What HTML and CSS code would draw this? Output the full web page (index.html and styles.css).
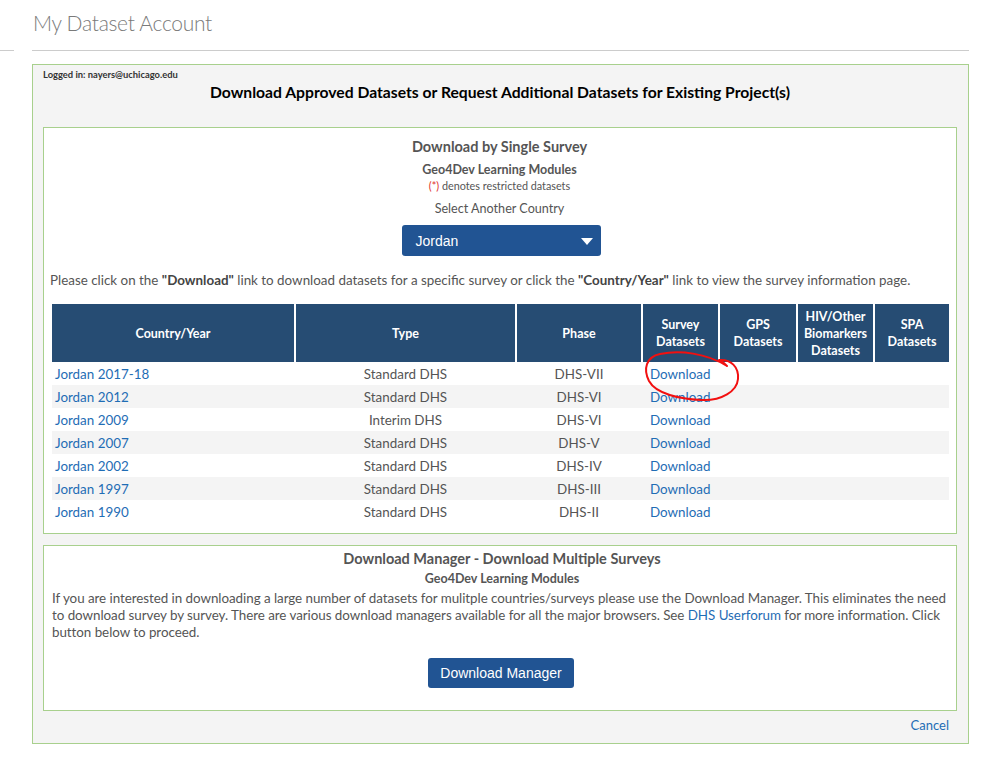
FILE: index.html
```html
<!DOCTYPE html>
<html lang="en">
<head>
<meta charset="utf-8">
<title>My Dataset Account</title>
<link rel="stylesheet" href="styles.css">
</head>
<body>
<div class="page">
  <div class="side-rule"></div>
  <div class="main">
    <div class="title-bar"><h1 class="title">My Dataset Account</h1></div>
    <div class="panel">
      <div class="logged">Logged in: nayers@uchicago.edu</div>
      <h2 class="heading">Download Approved Datasets or Request Additional Datasets for Existing Project(s)</h2>

      <div class="box single">
        <div class="box-title">Download by Single Survey</div>
        <div class="box-sub">Geo4Dev Learning Modules</div>
        <div class="note"><span class="red">(*)</span> denotes restricted datasets</div>
        <div class="select-label">Select Another Country</div>
        <div class="select-wrap">
          <div class="select">
            <span>Jordan</span>
            <span class="caret"></span>
          </div>
        </div>
        <p class="instr">Please click on the <b>"Download"</b> link to download datasets for a specific survey or click the <b>"Country/Year"</b> link to view the survey information page.</p>
        <table class="surveys">
          <colgroup>
            <col class="c1"><col class="c2"><col class="c3"><col class="c4"><col class="c5"><col class="c6"><col class="c7">
          </colgroup>
          <thead>
            <tr>
              <th>Country/Year</th>
              <th>Type</th>
              <th>Phase</th>
              <th>Survey<br>Datasets</th>
              <th>GPS<br>Datasets</th>
              <th>HIV/Other<br>Biomarkers<br>Datasets</th>
              <th>SPA<br>Datasets</th>
            </tr>
          </thead>
          <tbody>
            <tr><td class="cy"><a href="#">Jordan 2017-18</a></td><td class="ctr">Standard DHS</td><td class="ctr">DHS-VII</td><td class="dl"><a href="#">Download</a></td><td></td><td></td><td></td></tr>
            <tr><td class="cy"><a href="#">Jordan 2012</a></td><td class="ctr">Standard DHS</td><td class="ctr">DHS-VI</td><td class="dl"><a href="#">Download</a></td><td></td><td></td><td></td></tr>
            <tr><td class="cy"><a href="#">Jordan 2009</a></td><td class="ctr">Interim DHS</td><td class="ctr">DHS-VI</td><td class="dl"><a href="#">Download</a></td><td></td><td></td><td></td></tr>
            <tr><td class="cy"><a href="#">Jordan 2007</a></td><td class="ctr">Standard DHS</td><td class="ctr">DHS-V</td><td class="dl"><a href="#">Download</a></td><td></td><td></td><td></td></tr>
            <tr><td class="cy"><a href="#">Jordan 2002</a></td><td class="ctr">Standard DHS</td><td class="ctr">DHS-IV</td><td class="dl"><a href="#">Download</a></td><td></td><td></td><td></td></tr>
            <tr><td class="cy"><a href="#">Jordan 1997</a></td><td class="ctr">Standard DHS</td><td class="ctr">DHS-III</td><td class="dl"><a href="#">Download</a></td><td></td><td></td><td></td></tr>
            <tr><td class="cy"><a href="#">Jordan 1990</a></td><td class="ctr">Standard DHS</td><td class="ctr">DHS-II</td><td class="dl"><a href="#">Download</a></td><td></td><td></td><td></td></tr>
          </tbody>
        </table>
      </div>

      <div class="box manager">
        <div class="box-title">Download Manager - Download Multiple Surveys</div>
        <div class="box-sub">Geo4Dev Learning Modules</div>
        <p class="mgr-text">If you are interested in downloading a large number of datasets for mulitple countries/surveys please use the Download Manager. This eliminates the need to download survey by survey. There are various download managers available for all the major browsers. See <a href="#">DHS Userforum</a> for more information. Click button below to proceed.</p>
        <div class="btn-row"><button class="btn">Download Manager</button></div>
      </div>

      <div class="cancel-row"><a href="#">Cancel</a></div>
    </div>
  </div>

  <svg class="scribble" width="991" height="759" viewBox="0 0 991 759" aria-hidden="true">
    <path d="M727 366 C724 363 721 361 719 360 C731 359 739 367 738 379 C737 391 722 401 701 400 C680 399 656 394 649 381 C643 369 646 357 660 354 C680 350 706 353 727 366" fill="none" stroke="#f21010" stroke-width="2" stroke-linecap="round" stroke-linejoin="round"/>
  </svg>
</div>
</body>
</html>
```

FILE: styles.css
```css
* { box-sizing: border-box; }

html, body {
  margin: 0;
  padding: 0;
  background: #fff;
}

body {
  font-family: Lato, "Source Sans Pro", "Noto Sans", sans-serif;
  color: #555;
  font-size: 13.4px;
}

a { color: #1f6db5; text-decoration: none; }

.page {
  position: relative;
  display: flex;
  align-items: flex-start;
  width: 991px;
  min-height: 759px;
}

.side-rule {
  width: 14px;
  height: 51px;
  border-bottom: 1px solid #ccc;
  margin-right: 18px;
  flex: none;
}

.main {
  width: 937px;
  flex: none;
}

.title-bar {
  height: 51px;
  border-bottom: 1px solid #ccc;
  padding-top: 9px;
}

.title {
  margin: 0 0 0 1px;
  font-size: 21px;
  font-weight: 300;
  line-height: 28px;
  letter-spacing: -0.3px;
  color: #7a7a7a;
}

.panel {
  margin-top: 13px;
  border: 1px solid #a8d08d;
  background: #f4f4f4;
  padding: 4px 11px 9px 10px;
}

.logged {
  font-size: 9.4px;
  font-weight: 700;
  line-height: 12px;
  color: #333;
}

.heading {
  margin: 0;
  text-align: center;
  font-size: 15.7px;
  line-height: 22px;
  font-weight: 700;
  color: #000;
}

.box {
  background: #fff;
  border: 1px solid #a8d08d;
}

.single {
  margin-top: 24px;
  padding: 9px 7px 10px 6px;
  text-align: center;
}

.box-title {
  font-size: 14.5px;
  font-weight: 700;
  line-height: 20px;
  color: #555;
  text-align: center;
}

.box-sub {
  font-size: 12.5px;
  font-weight: 700;
  line-height: 16px;
  color: #555;
  text-align: center;
  margin-top: 5px;
}

.note {
  font-size: 10.8px;
  line-height: 14px;
  margin-top: 1px;
  color: #555;
}

.red { color: #e0302b; }

.select-label {
  font-size: 12.6px;
  line-height: 18px;
  margin-top: 7px;
  color: #555;
}

.select-wrap {
  display: flex;
  justify-content: center;
  margin-top: 7px;
}

.select {
  width: 199px;
  height: 31px;
  background: #215493;
  border-radius: 3px;
  color: #fff;
  font-family: "Liberation Sans", Arial, sans-serif;
  font-size: 14px;
  display: flex;
  align-items: center;
  justify-content: space-between;
  padding: 0 8px 0 14px;
  margin-left: 3px;
}

.caret {
  width: 0;
  height: 0;
  border-left: 6px solid transparent;
  border-right: 6px solid transparent;
  border-top: 7px solid #fff;
  margin-top: 1px;
}

.instr {
  margin: 14px 0 0 0;
  text-align: left;
  line-height: 20px;
  color: #555;
  white-space: nowrap;
}

.instr b { color: #444; }

.surveys {
  margin: 14px 0 0 2px;
  width: 897px;
  border-collapse: collapse;
  table-layout: fixed;
}

.c1 { width: 243px; }
.c2 { width: 221px; }
.c3 { width: 126px; }
.c4 { width: 77px; }
.c5 { width: 78px; }
.c6 { width: 77px; }
.c7 { width: 75px; }

.surveys th {
  background: #264c73;
  color: #fff;
  font-size: 12.5px;
  font-weight: 700;
  line-height: 17px;
  height: 58px;
  padding: 0 2px;
  text-align: center;
  vertical-align: middle;
  border-right: 2px solid #fff;
}

.surveys th:last-child { border-right: none; }

.surveys td {
  height: 23px;
  line-height: 18px;
  padding: 1px 0 0;
  color: #555;
  vertical-align: middle;
}

.surveys tbody tr:nth-child(even) td { background: #f4f4f4; }

.cy { text-align: left; padding-left: 3px !important; }
.ctr { text-align: center; }
.dl { text-align: left; padding-left: 8px !important; }

.manager {
  margin-top: 11px;
  padding: 3px 4px 22px 8px;
}

.manager .box-sub { margin-top: 2px; }

.mgr-text {
  margin: 3px 0 0;
  line-height: 17px;
  letter-spacing: -0.05px;
  color: #555;
  text-align: left;
}

.btn-row {
  display: flex;
  justify-content: center;
  margin-top: 17px;
}

.btn {
  width: 146px;
  height: 30px;
  background: #215493;
  color: #fff;
  border: none;
  border-radius: 3px;
  font-family: "Liberation Sans", Arial, sans-serif;
  font-size: 14px;
  padding: 0;
  margin-left: -2px;
}

.cancel-row {
  margin-top: 5px;
  text-align: right;
  line-height: 18px;
  font-size: 13px;
  padding-right: 8px;
}

.scribble {
  position: absolute;
  left: 0;
  top: 0;
  pointer-events: none;
}
```
